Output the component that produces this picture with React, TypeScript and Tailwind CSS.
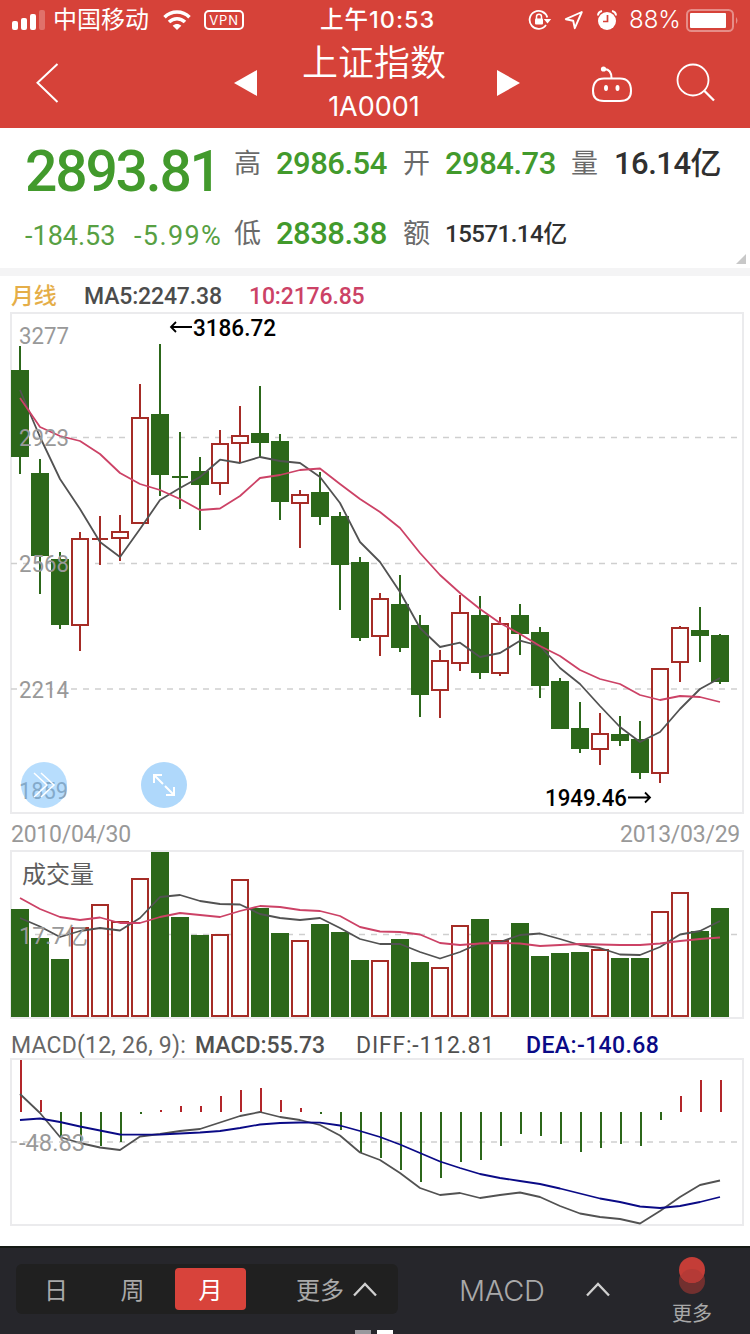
import type { ReactNode } from "react"

type Candle = [up: boolean, high: number, top: number, bottom: number, low: number, volTop: number]

const GREEN = "#2c671a"
const RED = "#a52c26"
const GRAY = "#525252"
const PINK = "#cc4266"
const NAVY = "#0a0a86"

const NUM = "font-[Roboto,'Noto_Sans_CJK_SC',sans-serif]"

// vertical positions are in screen units, one candle every 20 units
const candles: Candle[] = [
  [false, 346, 370, 457, 474, 909],
  [false, 459, 473, 556, 594, 938],
  [false, 552, 559, 625, 629, 959],
  [true, 532, 538, 626, 651, 927],
  [true, 516, 538, 540, 565, 904],
  [true, 515, 531, 539, 561, 921],
  [true, 384, 417, 524, 524, 878],
  [false, 344, 414, 475, 496, 852],
  [false, 432, 476, 478, 509, 917],
  [false, 457, 471, 485, 530, 935],
  [true, 430, 443, 484, 495, 934],
  [true, 406, 435, 444, 463, 879],
  [false, 386, 433, 443, 457, 908],
  [false, 434, 441, 502, 520, 933],
  [true, 490, 494, 504, 548, 940],
  [false, 472, 492, 517, 525, 924],
  [false, 512, 516, 565, 610, 932],
  [false, 557, 562, 638, 641, 960],
  [true, 593, 598, 637, 656, 960],
  [false, 575, 604, 648, 652, 939],
  [false, 615, 625, 695, 717, 962],
  [true, 650, 660, 691, 718, 967],
  [true, 595, 612, 664, 671, 925],
  [false, 596, 615, 673, 679, 919],
  [true, 617, 623, 674, 676, 940],
  [false, 604, 615, 634, 655, 923],
  [false, 627, 632, 686, 698, 956],
  [false, 678, 681, 729, 729, 953],
  [false, 702, 728, 749, 753, 952],
  [true, 713, 733, 750, 765, 949],
  [false, 716, 734, 741, 746, 958],
  [false, 721, 739, 773, 779, 958],
  [true, 668, 668, 774, 783, 911],
  [true, 626, 627, 663, 682, 892],
  [false, 607, 630, 636, 662, 931],
  [false, 634, 635, 682, 684, 908],
]

const ma5 = [
  390, 437, 479, 509, 542, 557, 529, 500, 488, 477, 459.7, 463, 457, 461, 463, 477, 503, 542, 562, 592, 628, 647, 642.7,
  657, 653, 640.7, 646, 668, 684, 706, 727, 742, 732, 709, 689, 678,
]
const ma10 = [
  398, 427, 436, 441, 454, 473, 484, 490, 499, 510, 508.5, 496, 478, 475, 470, 468.5, 484, 499, 512, 528, 553, 575, 593,
  609, 623, 634, 646, 656, 670, 679, 684, 695, 700, 696, 697, 702,
]
const volMa5 = [
  918, 926.5, 937, 931, 928, 930.5, 918, 897, 895, 901, 904, 904.5, 914, 918, 920, 918, 928, 939, 944, 944, 952, 958.5,
  952, 943, 942, 935, 933.5, 939, 945, 948, 954.5, 955, 947, 934.5, 931, 921,
]
const volMa10 = [
  898, 909, 917, 920, 917.5, 923, 923, 917, 913, 915, 917, 911, 906, 907, 910, 911, 916, 927, 931.5, 932, 934.5, 943,
  945, 943.5, 943, 943.5, 946, 945, 944, 944.5, 945, 945, 943.5, 941, 939, 937.5,
]
const macdEnds = [
  1060, 1100, 1137, 1141, 1146, 1142, 1114, 1110, 1106, 1106, 1096, 1090, 1088, 1100, 1108, 1114, 1130, 1153, 1158, 1170,
  1182, 1178, 1162, 1160, 1146, 1134, 1136, 1144, 1152, 1148, 1144, 1146, 1120, 1096, 1080, 1080,
]
const diff = [
  1094, 1113, 1137, 1143, 1147.5, 1150, 1136.5, 1134, 1131, 1129, 1122.5, 1116, 1112, 1117, 1120, 1125, 1135.5, 1152.5,
  1160, 1173, 1188, 1195, 1193, 1198, 1195, 1192.5, 1197, 1206, 1213.5, 1217, 1219, 1223.5, 1211, 1197, 1185, 1180.5,
]
const dea = [
  1120, 1118.5, 1122, 1126.5, 1130.5, 1134.5, 1134.7, 1134.5, 1133.5, 1132.5, 1131, 1128, 1124.5, 1123, 1122.5, 1122.7,
  1125.5, 1131, 1137, 1144.5, 1153, 1161.5, 1168, 1174, 1178, 1181, 1184, 1188.5, 1193.5, 1198.5, 1202, 1206.5, 1208,
  1206, 1202, 1197,
]

const cx = (i: number) => 20 + i * 20

function Line({ data, color }: { data: number[]; color: string }) {
  return (
    <polyline
      points={data.map((y, i) => `${cx(i)},${y}`).join(" ")}
      fill="none"
      stroke={color}
      strokeWidth="1.8"
      strokeLinejoin="round"
    />
  )
}

function Bar({ i, up, top, bottom }: { i: number; up: boolean; top: number; bottom: number }) {
  const x = cx(i) - 9
  const h = bottom - top
  if (h <= 2) {
    return <rect x={x + 1} y={top} width="16" height={h} fill={up ? RED : GREEN} />
  }
  return up ? (
    <rect x={x + 1} y={top + 1} width="16" height={h - 2} fill="#fff" stroke={RED} strokeWidth="2" />
  ) : (
    <rect x={x} y={top} width="18" height={h} fill={GREEN} />
  )
}

function Grid({ y }: { y: number }) {
  return <line x1="11" x2="738" y1={y} y2={y} stroke="#cfcfcf" strokeWidth="1.3" strokeDasharray="6 6" />
}

function Label({ x = 19, y, w, color = "#999", children, medium = false }: {
  x?: number
  y: number
  w: number
  color?: string
  children: ReactNode
  medium?: boolean
}) {
  return (
    <text
      x={x}
      y={y}
      textLength={w}
      lengthAdjust="spacingAndGlyphs"
      fill={color}
      className={`${NUM} text-[23px] ${medium ? "font-medium" : ""}`}
    >
      {children}
    </text>
  )
}

function Chart({ top, height, children }: { top: number; height: number; children: ReactNode }) {
  return (
    <svg viewBox={`0 ${top} 750 ${height}`} width="750" height={height} className="block shrink-0">
      <rect x="11" y={top + 1} width="732" height={height - 2} fill="#fff" stroke="#ebebed" strokeWidth="2" />
      {children}
    </svg>
  )
}

function StatusBar() {
  return (
    <div className="flex h-10 items-center font-[Inter,'Noto_Sans_CJK_SC',sans-serif] leading-none">
      <svg width="34" height="20" viewBox="0 0 34 20" className="ml-3" fill="#fff">
        <rect y="11" width="6" height="9" rx="2" />
        <rect x="9" y="8" width="6" height="12" rx="2" />
        <rect x="18" y="4" width="6" height="16" rx="2" />
        <rect x="27" width="6" height="20" rx="2" opacity=".25" />
      </svg>
      <span className="ml-[7px] w-[97px] whitespace-nowrap text-2xl leading-none">中国移动</span>
      <svg width="28" height="20" viewBox="0 0 28 20" className="ml-[13px]" fill="none" stroke="#fff" strokeWidth="3.6">
        <path d="M1.5 7.2C8.5 .3 19.5 .3 26.5 7.2" />
        <path d="M6 12c4.6-4.4 11.4-4.4 16 0" />
        <path d="M14 20l-4.300-4.300c2.500-2.200 6.100-2.200 8.600 0z" fill="#fff" stroke="none" />
      </svg>
      <span className="ml-[13px] flex h-5 w-10 items-center justify-center rounded-[5px] border-2 border-white text-[13px] tracking-[0.8px]">
        VPN
      </span>
      <span className="ml-[76px] w-[116px] whitespace-nowrap text-[23.5px] font-medium tracking-[1px]">上午10:53</span>
      <svg width="24" height="22" viewBox="0 0 24 22" className="ml-[92px]" fill="none" stroke="#fff" strokeWidth="1.8">
        <path d="M18 16A9 9 0 1 1 19.300 8.500" />
        <path d="M15.800 10h7.400l-3.700 4.500z" fill="#fff" stroke="none" />
        <rect x="7" y="9.500" width="8" height="6" rx="1" fill="#fff" stroke="none" />
        <path d="M8.500 10V7.700a2.500 2.500 0 0 1 5 0V10" strokeWidth="1.500" />
      </svg>
      <svg width="20" height="20" viewBox="0 0 20 20" className="ml-3" fill="none" stroke="#fff" strokeWidth="1.900">
        <path d="M17.800 2L1.800 9.200l7.400 1.500 1.600 7.500z" strokeLinejoin="round" />
      </svg>
      <svg width="20" height="21" viewBox="0 0 20 21" className="ml-[13px]">
        <circle cx="10" cy="11" r="9" fill="#fff" />
        <path d="M1 5.500A5 5 0 0 1 5 1M19 5.500A5 5 0 0 0 15 1" fill="none" stroke="#fff" strokeWidth="2" />
        <path d="M10.500 5v6.500H6" fill="none" stroke="#d64239" strokeWidth="1.700" />
      </svg>
      <span className="ml-[12px] w-[52px] whitespace-nowrap text-2xl leading-none font-light">88%</span>
      <svg width="54" height="23" viewBox="0 0 54 23" className="ml-[5px]" fill="#fff">
        <rect x="1" y="1" width="46" height="21" rx="4.500" fill="none" stroke="#fff" strokeWidth="2" opacity=".4" />
        <rect x="4" y="4" width="36" height="15" rx="1" />
        <path d="M50 8q3 3.500 0 7z" opacity=".4" />
      </svg>
    </div>
  )
}

function Header() {
  return (
    <header className="h-32 bg-[#d64239] text-white">
      <StatusBar />
      <div className="flex h-[88px] items-start font-[Inter,'Noto_Sans_CJK_SC',sans-serif]">
        <svg width="24" height="40" viewBox="0 0 24 40" className="mt-[23px] ml-9" fill="none" stroke="#fff" strokeWidth="2">
          <path d="M21.500 1L1.500 19.800L21.500 39" />
        </svg>
        <svg width="23" height="26" viewBox="0 0 23 26" className="mt-[30px] ml-[174px]">
          <path d="M23 0v26L0 13z" fill="#fff" />
        </svg>
        <div className="ml-[45px] flex w-36 flex-col items-center whitespace-nowrap">
          <h1 className="mt-[5px] text-4xl leading-9 font-[350]">上证指数</h1>
          <span className="mt-2 text-[27px] leading-9">1A0001</span>
        </div>
        <svg width="23" height="26" viewBox="0 0 23 26" className="mt-[30px] ml-[51px]">
          <path d="M0 0v26L23 13z" fill="#fff" />
        </svg>
        <svg width="42" height="38" viewBox="0 0 42 38" className="mt-[25px] ml-[71px]" fill="none" stroke="#fff" strokeWidth="2">
          <path d="M13 13.500h16q11 0 11 12.500q0 10-11 10h-16q-11 0-11-10q0-12.500 11-12.500z" />
          <path d="M13.500 4q7 .5 7 9" />
          <circle cx="12.500" cy="4" r="2.600" fill="#fff" stroke="none" />
          <ellipse cx="15" cy="23" rx="2" ry="3" fill="#fff" stroke="none" />
          <ellipse cx="26.500" cy="23" rx="2" ry="3" fill="#fff" stroke="none" />
        </svg>
        <svg width="40" height="40" viewBox="0 0 40 40" className="mt-[23px] ml-[43px]" fill="none" stroke="#fff" strokeWidth="1.800">
          <circle cx="17" cy="17" r="15.500" />
          <path d="M28 27.500L38 37.500" strokeWidth="2.300" />
        </svg>
      </div>
    </header>
  )
}

function Quote() {
  return (
    <section className={`relative flex h-[140px] whitespace-nowrap text-[#429a2c] ${NUM}`}>
      <div className="w-[234px] shrink-0 pl-[25px]">
        <div className="mt-[14px] text-[57px] leading-[60px] font-medium tracking-[-2.200px]">2893.81</div>
        <div className="mt-[19px] flex text-[27px] leading-[30px] text-[#57a043]">
          <span className="w-[109px] shrink-0">-184.53</span>
          <span className="tracking-[1.400px]">-5.99%</span>
        </div>
      </div>
      <div className="mt-px grid h-[140px] shrink-0 grid-cols-[42px_127px_42px_126px_43px_120px] grid-rows-[70px_70px] items-center text-[31px] font-medium tracking-[-0.500px]">
        <span className="text-[27px] font-normal text-[#6a6a6a]">高</span>
        <span>2986.54</span>
        <span className="text-[27px] font-normal text-[#6a6a6a]">开</span>
        <span>2984.73</span>
        <span className="text-[27px] font-normal text-[#6a6a6a]">量</span>
        <span className="text-[#303030]">16.14亿</span>
        <span className="text-[27px] font-normal text-[#6a6a6a]">低</span>
        <span>2838.38</span>
        <span className="text-[27px] font-normal text-[#6a6a6a]">额</span>
        <span className="text-2xl tracking-[-0.500px] text-[#303030]">15571.14亿</span>
      </div>
      <svg width="10" height="10" className="absolute right-1 bottom-1">
        <path d="M10 0v10H0z" fill="#c8c8c8" />
      </svg>
    </section>
  )
}

function PriceChart() {
  return (
    <div className="relative">
      <Chart top={312} height={502}>
        <Grid y={437.5} />
        <Grid y={563.5} />
        <Grid y={689} />
        {candles.map(([up, high, top, bottom, low], i) => (
          <g key={i}>
            <rect x={cx(i) - 1} y={high} width="2" height={low - high} fill={up ? RED : GREEN} />
            <Bar i={i} up={up} top={top} bottom={bottom} />
          </g>
        ))}
        <Line data={ma5} color={GRAY} />
        <Line data={ma10} color={PINK} />
        <Label y={344} w={50}>3277</Label>
        <Label y={446} w={50}>2923</Label>
        <Label y={572} w={50}>2568</Label>
        <Label y={698} w={50}>2214</Label>
        <Label y={799} w={49}>1859</Label>
        <Label x={193} y={336} w={83} color="#000" medium>3186.72</Label>
        <Label x={545} y={806} w={82} color="#000" medium>1949.46</Label>
        <g fill="none" stroke="#000" strokeWidth="1.800">
          <path d="M192 327H171M176 322L171 327L176 332" />
          <path d="M628 797.500H650M645 792.500L650 797.500L645 802.500" />
        </g>
      </Chart>
      {/* floating chart controls */}
      <button className="absolute bottom-[6px] left-[21px] size-[46px] rounded-full bg-[#6fbcfc]/50">
        <svg width="46" height="46" fill="none" stroke="#fff" strokeWidth="1.500">
          <path d="M13 11L26 23L13 35M20 11L33 23L20 35" />
        </svg>
      </button>
      <button className="absolute bottom-[6px] left-[141px] size-[46px] rounded-full bg-[#afd8fb]">
        <svg width="46" height="46" fill="none" stroke="#fff" strokeWidth="2">
          <path d="M22 22L13 13M13 21V13H21M24 24L33 33M33 25V33H25" />
        </svg>
      </button>
    </div>
  )
}

function VolumeChart() {
  return (
    <Chart top={850} height={169}>
      <Grid y={934.5} />
      {candles.map(([up, , , , , volTop], i) => (
        <Bar key={i} i={i} up={up} top={volTop} bottom={1017} />
      ))}
      <Line data={volMa5} color={GRAY} />
      <Line data={volMa10} color={PINK} />
      <text x="22" y="883" fill="#5e5e5e" className="font-['Noto_Sans_CJK_SC',sans-serif] text-2xl">
        成交量
      </text>
      <Label y={944} w={69}>17.7亿</Label>
    </Chart>
  )
}

function MacdChart() {
  return (
    <Chart top={1058} height={168}>
      <Grid y={1142} />
      {macdEnds.map((y, i) => (
        <rect
          key={i}
          x={cx(i)}
          y={Math.min(y, 1112)}
          width="2"
          height={Math.abs(y - 1112)}
          fill={y < 1112 ? "#b3262a" : GREEN}
        />
      ))}
      <Line data={diff} color={GRAY} />
      <Line data={dea} color={NAVY} />
      <Label y={1151} w={66}>-48.83</Label>
    </Chart>
  )
}

function ChevronUp() {
  return (
    <svg width="24" height="15" viewBox="0 0 24 15" fill="none" stroke="#d0d0d0" strokeWidth="2.300">
      <path d="M1 13.500L12 2L23 13.500" />
    </svg>
  )
}

function BottomBar() {
  return (
    <footer className="relative flex h-[88px] border-t-2 border-[#151915] bg-[#26262b] font-[Inter,'Noto_Sans_CJK_SC',sans-serif] text-2xl text-[#a9a9a9]">
      <div className="mt-4 ml-4 flex h-[50px] w-[382px] items-center rounded-md bg-[#202020]">
        <span className="w-20 pt-[3px] text-center">日</span>
        <span className="w-[73px] pt-[3px] text-center">周</span>
        <span className="ml-1.5 flex h-[42px] w-[71px] items-center justify-center rounded bg-[#d8433b] pt-[3px] text-white">
          月
        </span>
        <span className="mr-[9px] ml-[50px] pt-[3px]">更多</span>
        <ChevronUp />
      </div>
      <div className="mt-4 ml-[61px] flex h-[50px] w-[151px] items-center justify-between">
        <span className="pt-1 text-[29px] font-[350] tracking-[-0.300px]">MACD</span>
        <ChevronUp />
      </div>
      <div className="ml-[60px] flex w-[44px] flex-col items-center">
        <svg width="26" height="38" viewBox="0 0 26 38" className="mt-[9px]">
          <circle cx="13" cy="24" r="13" fill="#72302f" />
          <circle cx="13" cy="13" r="13" fill="#c43d37" />
          <path d="M1.500 19a13 13 0 0 1 23 0a13 13 0 0 1-23 0z" fill="#b53a36" />
        </svg>
        <span className="mt-[7px] text-xl leading-6">更多</span>
      </div>
      <div className="absolute bottom-0 left-[355px] flex gap-1.5">
        <i className="h-1 w-4 bg-[#98989d]" />
        <i className="h-1 w-4 bg-white" />
      </div>
    </footer>
  )
}

export default function App() {
  return (
    <div className="flex h-[1334px] w-[750px] flex-col overflow-hidden bg-white">
      <Header />
      <Quote />
      <div className="h-2 bg-[#f4f4f5]" />
      <div className={`flex h-9 items-center whitespace-nowrap pt-1.5 pl-[11px] text-[23px] font-medium tracking-[-0.150px] ${NUM}`}>
        <span className="w-[73px] text-[#e5ae48]">月线</span>
        <span className="w-[165px] text-[#4c4c4c]">MA5:2247.38</span>
        <span className="text-[#cc4266]">10:2176.85</span>
      </div>
      <PriceChart />
      <div className={`flex h-9 items-center justify-between pt-[7px] pr-[10px] pl-[11px] text-[23px] tracking-[-0.250px] text-[#999] ${NUM}`}>
        <span>2010/04/30</span>
        <span>2013/03/29</span>
      </div>
      <VolumeChart />
      <div className={`flex h-[39px] items-center whitespace-nowrap pt-4 pl-[11px] text-[23px] ${NUM}`}>
        <span className="w-[184px] tracking-[0.200px] text-[#666]">MACD(12, 26, 9):</span>
        <span className="w-[161px] font-medium text-[#505050]">MACD:55.73</span>
        <span className="w-[170px] tracking-[0.800px] text-[#505050]">DIFF:-112.81</span>
        <span className="font-medium tracking-[0.400px] text-[#0a0a86]">DEA:-140.68</span>
      </div>
      <MacdChart />
      <div className="h-5" />
      <BottomBar />
    </div>
  )
}
